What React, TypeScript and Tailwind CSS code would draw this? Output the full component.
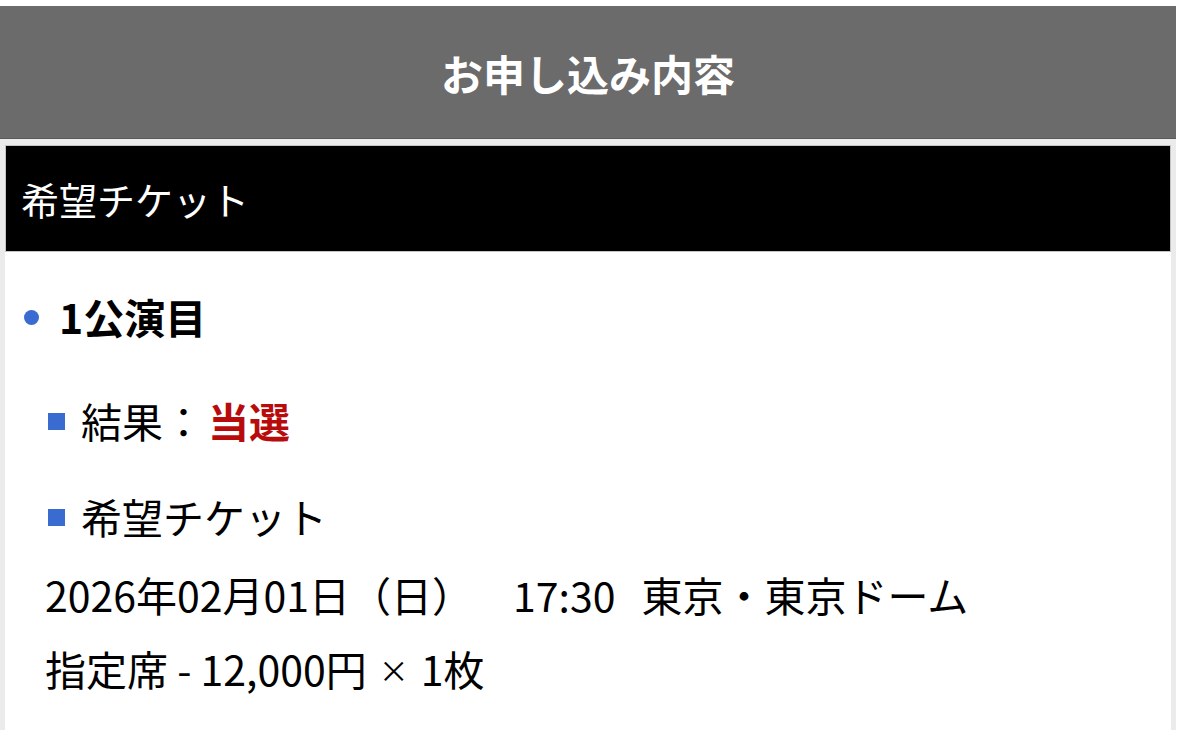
const jp = "font-['Noto_Sans_CJK_JP','Noto_Sans',sans-serif]";

function Square() {
  return <span className="mr-[16px] inline-block h-[17px] w-[17px] bg-[#3a6bd0]" />;
}

export default function App() {
  return (
    <div className={`min-h-[730px] bg-white pt-[6px] ${jp}`}>
      <div className="flex min-h-[724px] w-[1176px] flex-col bg-[#ebebeb]">
        <div className="flex h-[133px] items-center justify-center border-b border-[#5a5a5a] bg-[#6b6b6b] text-[42px] font-bold text-white">
          お申し込み内容
        </div>

        <div className="flex flex-1 flex-col px-[5px] pt-[6px]">
          <div className="flex h-[107px] items-center border border-[#c4c4c4] bg-black pl-[15px] text-[38px] text-white">
            希望チケット
          </div>

          <div className="flex-1 bg-white pl-[19px] pt-[45px] text-[41px] text-black">
            <div className="flex h-[40px] items-center">
              <span className="mr-[20px] inline-block h-[15px] w-[15px] rounded-full bg-[#3a6bd0]" />
              <span className="font-bold">1公演目</span>
            </div>

            <div className="mt-[64px] flex h-[40px] items-center pl-[24px]">
              <Square />
              <span className="mr-[4px]">結果：</span>
              <span className="font-bold text-[#b80c0c]">当選</span>
            </div>

            <div className="mt-[56px] flex h-[40px] items-center pl-[24px]">
              <Square />
              <span>希望チケット</span>
            </div>

            <div className="mt-[38px] flex h-[40px] items-center pl-[21px]">
              <span>2026年02月01日（日）</span>
              <span className="ml-[40px]">17:30</span>
              <span className="ml-[26px]">東京・東京ドーム</span>
            </div>

            <div className="mt-[34px] flex h-[40px] items-center pl-[21px]">
              <span>指定席 - 12,000円</span>
              <span className="mx-[12px] text-[30px]">×</span>
              <span>1枚</span>
            </div>
          </div>
        </div>
      </div>
    </div>
  );
}
